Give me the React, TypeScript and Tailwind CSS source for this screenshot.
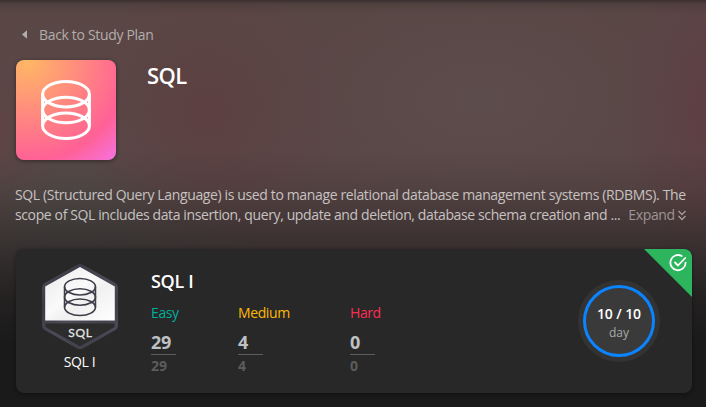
import type { ReactNode } from 'react';

function Rings() {
  return (
    <>
      <ellipse cx="25" cy="14.2" rx="23.4" ry="12.7" />
      <ellipse cx="25" cy="30" rx="23.4" ry="12.7" />
      <ellipse cx="25" cy="45.8" rx="23.4" ry="12.7" />
      <path d="M1.6 14.2V45.8M48.4 14.2V45.8" />
    </>
  );
}

function Badge() {
  return (
    <svg viewBox="0 0 78 88" className="block h-[88px] w-[78px]">
      <defs>
        <linearGradient id="frame" x1="0" y1="0" x2="1" y2="1">
          <stop offset="0" stopColor="#51515c" />
          <stop offset="0.25" stopColor="#3b3b45" />
          <stop offset="0.5" stopColor="#4b4b57" />
          <stop offset="0.75" stopColor="#41414c" />
          <stop offset="1" stopColor="#565663" />
        </linearGradient>
        <linearGradient id="face" x1="0" y1="0" x2="1" y2="1">
          <stop offset="0" stopColor="#e9e9e9" />
          <stop offset="0.45" stopColor="#fafafa" />
          <stop offset="0.6" stopColor="#f0f0f0" />
          <stop offset="1" stopColor="#ffffff" />
        </linearGradient>
      </defs>
      <path d="M36.2 1.8Q39 .3 41.8 1.8L73.5 19.5Q77 21.5 77 25V62Q77 65.5 73.5 67.6L41.8 85.5Q39 87 36.2 85.5L4.5 67.6Q1 65.5 1 62V25Q1 21.5 4.5 19.5Z" fill="url(#frame)" />
      <path d="M39 4L73.8 23.5V57.500H4.200V23.500Z" fill="url(#face)" />
      <path d="M4.500 60.500H73.500V64L40.500 82.500Q39 83.300 37.500 82.500L4.500 64Z" fill="#2b2c2b" />
      <g transform="translate(22.500 14.500) scale(.66 .65)" fill="none" stroke="#3e3e48" strokeWidth="2.500">
        <Rings />
      </g>
      <text x="39.500" y="73.500" textAnchor="middle" fill="#e4e4e4" fontSize="12" letterSpacing=".8" style={{ fontFamily: 'Lato, sans-serif', fontWeight: 400 }} stroke="#e4e4e4" strokeWidth=".300">SQL</text>
    </svg>
  );
}

function Stat({ label, value, tone, className }: { label: string; value: ReactNode; tone: string; className: string }) {
  return (
    <div className={className}>
      <div className={`text-[14px] leading-5 tracking-[-0.4px] ${tone}`}>{label}</div>
      <div className="mt-2 text-[18px] font-bold leading-[22px] tracking-[-0.4px] text-[#bfc0c4]">{value}</div>
      <div className="mt-px h-px w-[25px] bg-[#5c5c5c]" />
      <div className="mt-px text-[14px] font-bold leading-5 tracking-[-0.1px] text-[#5c5c5c]">{value}</div>
    </div>
  );
}

export default function App() {
  return (
    <main className="h-[407px] w-[706px] overflow-hidden whitespace-nowrap bg-[linear-gradient(to_bottom,rgba(26,26,26,0.5)_0,rgba(26,26,26,0.15)_4px,transparent_14px,transparent_150px,rgba(26,26,26,0.14)_190px,rgba(26,26,26,0.48)_240px,rgba(26,26,26,0.86)_300px,#1a1a1a_345px),radial-gradient(ellipse_130px_140px_at_205px_112px,#5d4041,#5d404100),radial-gradient(ellipse_90px_170px_at_715px_110px,#5f3e43,#5f3e4300),radial-gradient(ellipse_200px_120px_at_480px_100px,#5c4c4b,#5c4c4b00),radial-gradient(ellipse_180px_100px_at_70px_220px,#524d4a,#524d4a00),radial-gradient(ellipse_60px_100px_at_0px_160px,#604342,#60434200),linear-gradient(#594745,#5c4749)] px-4 font-['Open_Sans',sans-serif] font-[450]">
      <div className="flex h-[60px] items-center pt-[9px]">
        <svg viewBox="0 0 6 10" className="ml-[6px] h-[9px] w-[5px] fill-[#b3afae]"><path d="M6 0V10L0 5Z" /></svg>
        <span className="ml-3 text-[14px] tracking-[-0.33px] text-[#b3adac]">Back to Study Plan</span>
      </div>
      <header className="flex h-[100px]">
        <div className="flex size-[100px] items-center justify-center rounded-lg bg-[radial-gradient(circle_at_12%_2%,#ffb765_0%,#ff6196_75%,#f476ee_104%)] shadow-[0_1px_4px_rgba(0,0,0,0.45)]">
          <svg viewBox="0 0 50 60" fill="none" stroke="white" strokeWidth="3" className="h-[60px] w-[50px]"><Rings /></svg>
        </div>
        <h1 className="ml-[31px] text-[22px] font-semibold leading-[30px] tracking-[-0.6px] text-white">SQL</h1>
      </header>
      <div className="-ml-px mt-[25px] text-[14px] leading-5 tracking-[-0.365px] text-[#c7c2c1]">
        <p>SQL (Structured Query Language) is used to manage relational database management systems (RDBMS). The</p>
        <p className="flex">
          <span className="tracking-[-0.38px]">scope of SQL includes data insertion, query, update and deletion, database schema creation and ...</span>
          <span className="ml-2 text-[#9d9594]">Expand</span>
          <svg viewBox="0 0 10 12" fill="none" stroke="#a59d9c" strokeWidth="1.300" className="ml-[2px] mt-[5px] h-3 w-[10px]"><path d="M1.500 1L5 4.500L8.500 1M1.500 6L5 9.500L8.500 6" /></svg>
        </p>
      </div>
      <section className="relative mt-6 flex h-36 w-[676px] overflow-hidden rounded-lg bg-[#282828] shadow-[0_1px_4px_rgba(0,0,0,0.4)]">
        <div className="ml-[25px] flex w-[78px] flex-col items-center pt-[14px]">
          <Badge />
          <span className="pt-px pr-px text-[14px] leading-5 tracking-[-0.4px] text-white">SQL I</span>
        </div>
        <div className="ml-8 w-[420px] pt-5">
          <h2 className="text-[18px] font-semibold leading-6 tracking-[-0.300px] text-white">SQL I</h2>
          <div className="mt-[10px] flex">
            <Stat label="Easy" value="29" tone="text-[#00af9b]" className="w-[87px]" />
            <Stat label="Medium" value="4" tone="text-[#ffb800]" className="w-[112px]" />
            <Stat label="Hard" value="0" tone="text-[#ff2d55]" className="w-[60px]" />
          </div>
        </div>
        <div className="ml-[7px] mt-[31px] flex size-[82px] items-center justify-center rounded-full bg-[#333333]">
          <div className="flex size-[72px] flex-col items-center justify-center rounded-full border-[3px] border-[#0a84ff] bg-[#3a3a3a] pt-[3px]">
            <span className="text-[14px] font-semibold leading-5 tracking-[-0.1px] text-white">10 / 10</span>
            <span className="text-[12px] leading-[18px] text-[#a9a9a9]">day</span>
          </div>
        </div>
        <svg viewBox="0 0 48 48" className="absolute right-0 top-0 size-12">
          <path d="M0 0H48V48Z" fill="#2cb55d" />
          <g fill="none" stroke="white" strokeWidth="1.800" strokeLinecap="round" strokeLinejoin="round">
            <path d="M37.700 7A7.600 7.600 0 1 0 41.600 13.600" />
            <path d="M31 13.500L34 16.500L41.200 9" />
          </g>
        </svg>
      </section>
    </main>
  );
}
